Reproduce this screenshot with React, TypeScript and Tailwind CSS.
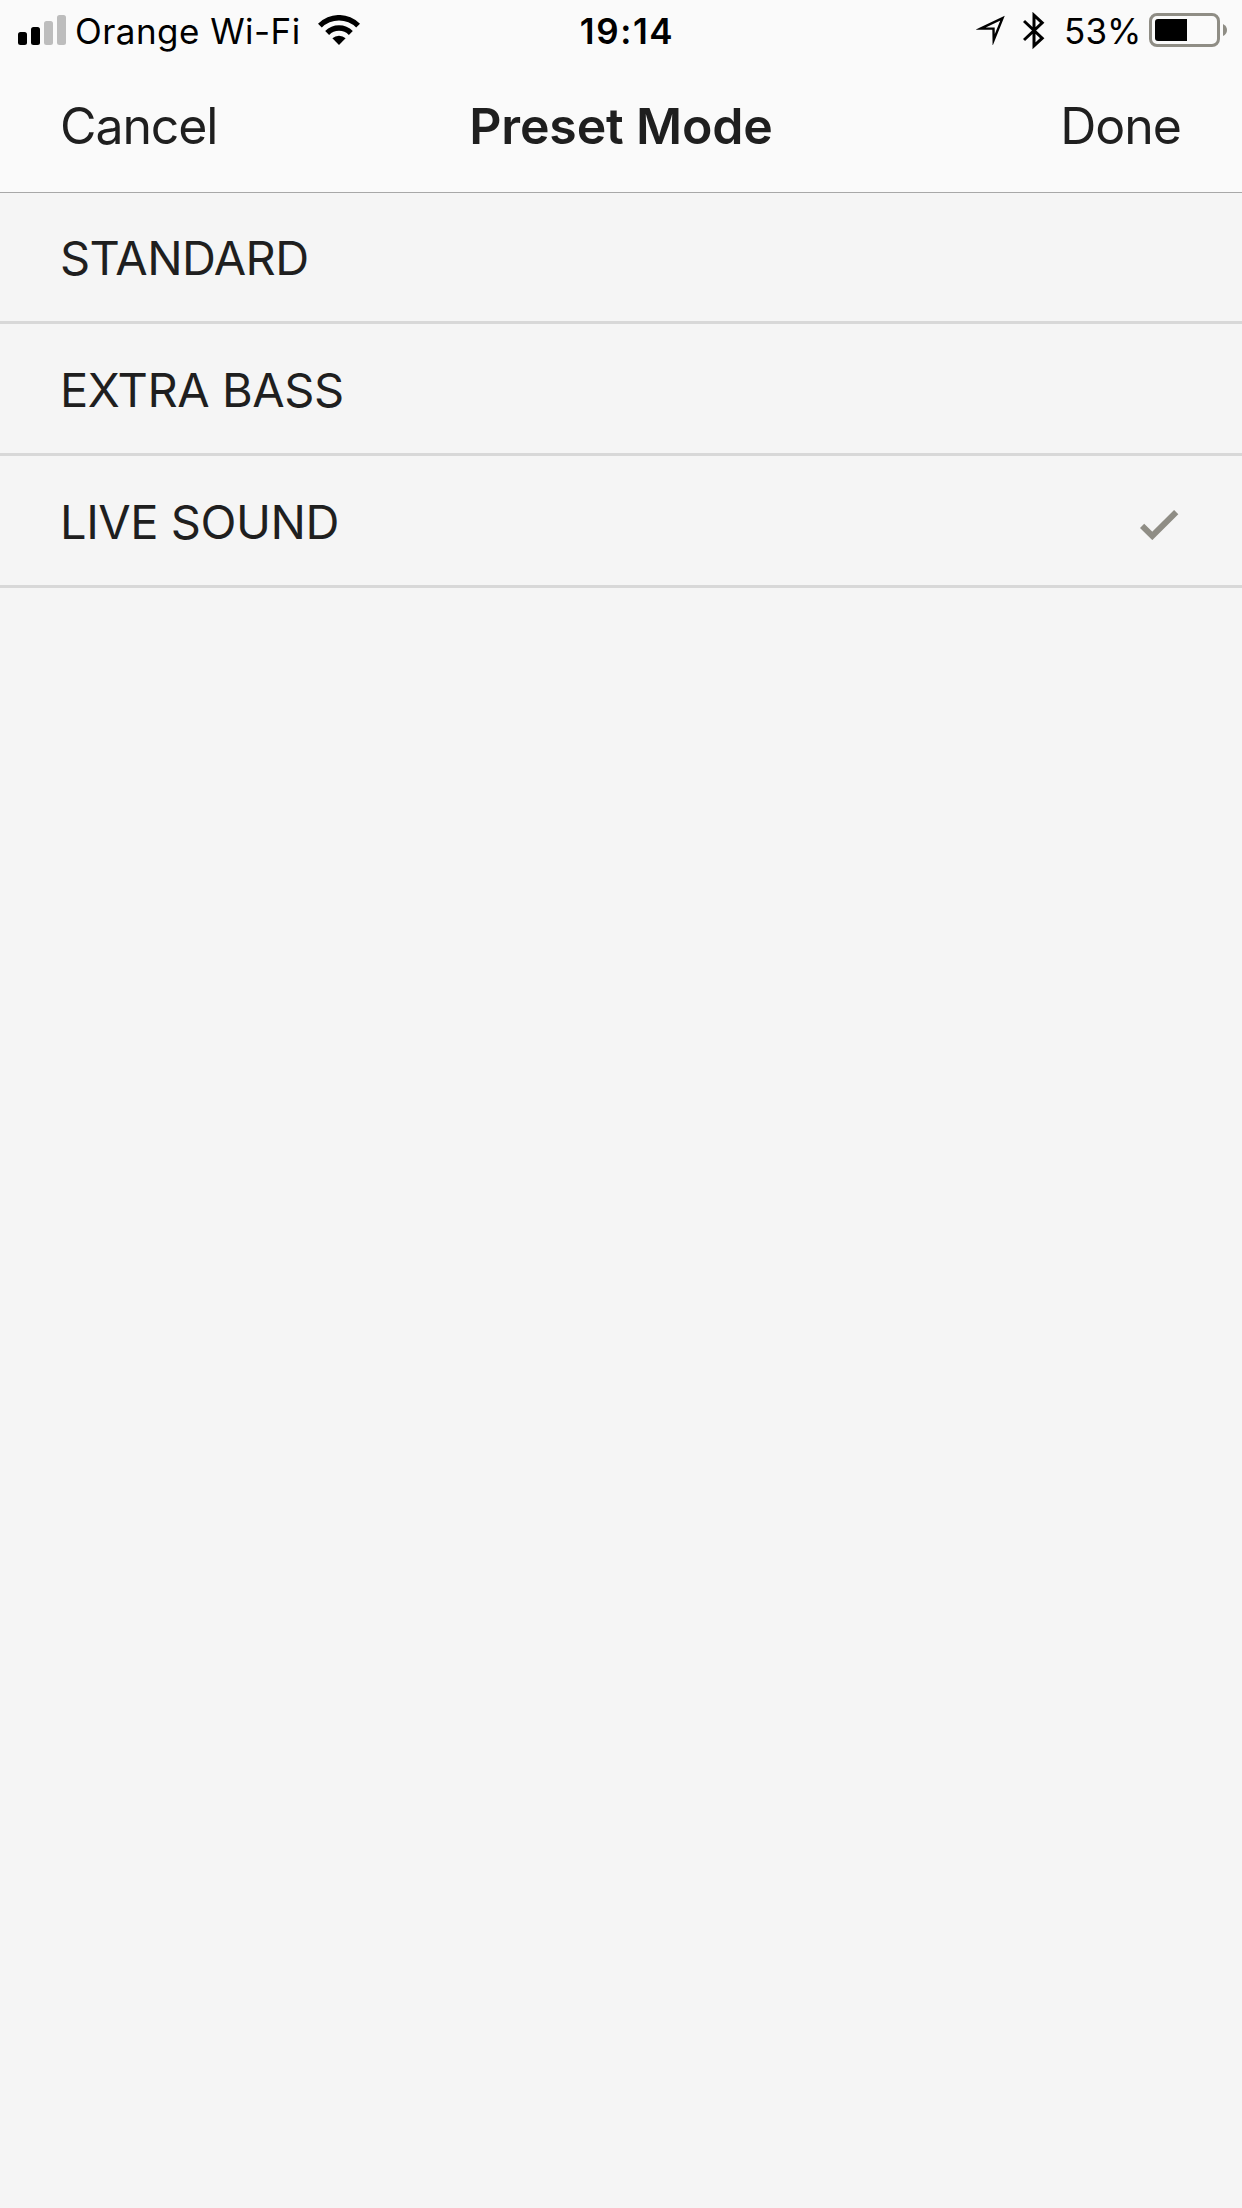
import React, {useState} from 'react';

interface Preset {
    id: string;
    label: string;
    className: string;
}

const presets: Preset[] = [
    {id: 'standard', label: 'STANDARD', className: 'h-[131px] tracking-[-0.6px]'},
    {id: 'extra-bass', label: 'EXTRA BASS', className: 'h-[132px] tracking-[-0.45px]'},
    {id: 'live-sound', label: 'LIVE SOUND', className: 'h-[132px] tracking-[-0.45px]'},
];

const SignalIcon: React.FC = () => (
    <svg className="block h-[30px] w-12" viewBox="0 0 48 30">
        <rect x="0" y="17" width="9" height="13" rx="2.5" fill="#000"/>
        <rect x="13" y="12" width="9" height="18" rx="2.5" fill="#000"/>
        <rect x="26" y="6" width="9" height="24" rx="2.5" fill="#bdbdbd"/>
        <rect x="39" y="0" width="9" height="30" rx="2.5" fill="#bdbdbd"/>
    </svg>
);

const WifiIcon: React.FC = () => (
    <svg className="block h-[30px] w-[42px]" viewBox="0 0 42 30">
        <path d="M0 8.8A29.4 29.4 0 0 1 42 8.8L38.2 12.6A24.2 24.2 0 0 0 3.8 12.6Z"/>
        <path d="M7.2 16A19.4 19.4 0 0 1 34.8 16L30.9 19.9A14 14 0 0 0 11.1 19.9Z"/>
        <path d="M14.4 23.3A9.6 9.6 0 0 1 27.6 23.3L21 30Z"/>
    </svg>
);

const LocationIcon: React.FC = () => (
    <svg className="block h-[30px] w-[30px]" viewBox="0 0 30 30">
        <path d="M4.5 13.6L26.5 3.2L17.7 25L17.5 13.6Z" fill="none" stroke="#000" strokeWidth="2.4" strokeMiterlimit="10"/>
    </svg>
);

const BluetoothIcon: React.FC = () => (
    <svg className="block h-[38px] w-[22px]" viewBox="0 0 22 38">
        <path d="M1 9L19.2 26.2L11 33.8V3.2L19.2 10.8L1 28" fill="none" stroke="#000" strokeWidth="3"/>
    </svg>
);

const BatteryIcon: React.FC = () => (
    <svg className="block h-[34px] w-[79px]" viewBox="0 0 79 34">
        <rect x="1.5" y="1.5" width="68" height="31" rx="6.5" fill="none" stroke="#8f8d85" strokeWidth="3"/>
        <path d="M38 6V28H9A3 3 0 0 1 6 25V9A3 3 0 0 1 9 6Z"/>
        <path d="M74 11Q78 13 78 17T74 23Z" fill="#8f8d85"/>
    </svg>
);

const CheckIcon: React.FC = () => (
    <svg className="mt-1.5 block h-[30px] w-10" viewBox="0 0 40 30">
        <path d="M2.1 15.8L12.3 25.9L36.2 2.1" fill="none" stroke="#8f8d85" strokeWidth="6"/>
    </svg>
);

const StatusBar: React.FC = () => (
    <div className="grid h-[60px] grid-cols-[1fr_auto_1fr] text-[35px] leading-[60px] text-black">
        <div className="flex pl-[18px]">
            <div className="pt-[15px]"><SignalIcon/></div>
            <span className="ml-[9px] w-[225px] whitespace-nowrap pt-[1px] tracking-[0.45px]">Orange Wi-Fi</span>
            <div className="ml-[18px] pt-[15px]"><WifiIcon/></div>
        </div>
        <span className="pt-[1px] pl-3 font-semibold tracking-[1.6px]">19:14</span>
        <div className="flex justify-end pr-[14px]">
            <div className="pt-[15px]"><LocationIcon/></div>
            <div className="ml-[17px] pt-3"><BluetoothIcon/></div>
            <span className="ml-[19px] w-[77px] whitespace-nowrap pt-[1px] tracking-[0.1px]">53%</span>
            <div className="ml-2 pt-[13px]"><BatteryIcon/></div>
        </div>
    </div>
);

const App: React.FC = () => {
    const [selected, setSelected] = useState('live-sound');

    return (
        <div className="h-[2208px] w-[1242px] overflow-hidden bg-[#f5f5f5] font-['Inter',sans-serif] text-[#1f1f1f]">
            <header className="h-[193px] border-b border-[#a8a8a8] bg-[#fafafa]">
                <StatusBar/>
                <nav className="grid h-[132px] grid-cols-[1fr_auto_1fr] items-start px-[60px] pt-[34px] text-[50px] leading-[64px]">
                    <button className="justify-self-start tracking-[-1.1px]">Cancel</button>
                    <h1 className="font-semibold tracking-[-0.15px]">Preset Mode</h1>
                    <button className="justify-self-end pr-[1px] tracking-[-1px]">Done</button>
                </nav>
            </header>
            <ul>
                {presets.map((preset) => (
                    <li key={preset.id}
                        onClick={() => setSelected(preset.id)}
                        className={`flex items-center justify-between border-b-[3px] border-[#d8d8d8] pt-[3px] pr-[62px] pl-[60px] text-[47px] ${preset.className}`}>
                        <span>{preset.label}</span>
                        {selected === preset.id && <CheckIcon/>}
                    </li>
                ))}
            </ul>
        </div>
    );
};

export default App;
